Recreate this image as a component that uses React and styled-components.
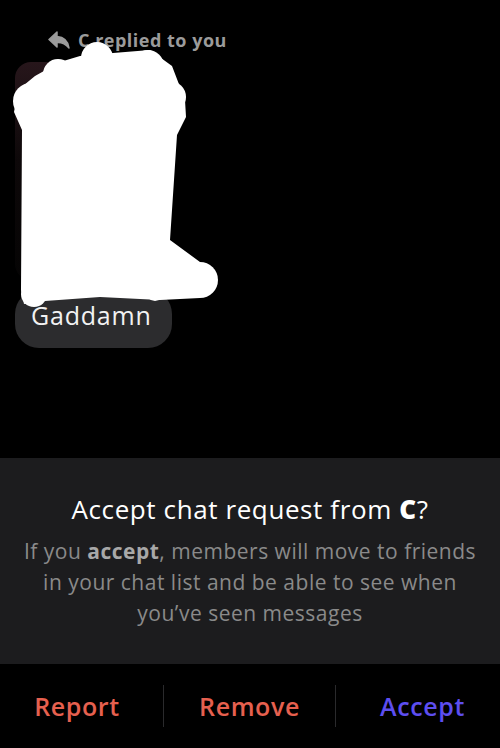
import React from "react";
import styled, { createGlobalStyle } from "styled-components";

const GlobalStyle = createGlobalStyle`
  html, body {
    margin: 0;
    padding: 0;
    background: #000;
  }
  * { box-sizing: border-box; }
`;

function ReplyIcon() {
  return (
    <svg width="22" height="18" viewBox="0 0 22 18">
      <path
        d="M9 1 L1 8.5 L9 16 L9 11.5 C14 11.2 17.5 12.8 21 17 C20 10.5 16.5 6.2 9 5.6 Z"
        fill="#9b9b9b"
        stroke="#9b9b9b"
        strokeWidth="1.5"
        strokeLinejoin="round"
      />
    </svg>
  );
}

// the white scribble that hides the snap preview (drawn in page coords, shifted up 31px)
function Scribble() {
  return (
    <svg width="240" height="290" viewBox="0 0 240 290">
      <g fill="#fff" transform="translate(0,-31)">
        <circle cx="97" cy="58" r="16" />
        <circle cx="148" cy="66" r="16" />
        <circle cx="170" cy="97" r="16" />
        <circle cx="31" cy="101" r="18" />
        <circle cx="58" cy="74" r="15" />
        <circle cx="200" cy="280" r="18" />
        <circle cx="155" cy="291" r="10" />
        <circle cx="34" cy="294" r="13" />
        <path d="M80 56 L113 53 L150 50 L172 66 L185 100 L186 117 L177 135 L170 240 L200 262 L200 298 L160 300 L100 297 L45 301 L24 304 L21 290 L22 130 L14 112 L18 90 L35 76 L60 62 Z" />
      </g>
    </svg>
  );
}

export default function App() {
  return (
    <>
      <GlobalStyle />
      <Screen>
        <ChatArea>
          <ReplyLabel>
            <ReplyIcon />
            C replied to you
          </ReplyLabel>
          <MessageStack>
            <QuotedSnap />
            <Bubble>Gaddamn</Bubble>
            <Cover>
              <Scribble />
            </Cover>
          </MessageStack>
        </ChatArea>

        <Sheet>
          <Title>
            Accept chat request from <strong>C</strong>?
          </Title>
          <Body>
            If you <strong>accept</strong>, members will move to friends
            <br />
            in your chat list and be able to see when
            <br />
            you’ve seen messages
          </Body>
        </Sheet>

        <ActionBar>
          <Action $color="#e6604f" $pad="0 9px 0 0">Report</Action>
          <Action $color="#e6604f" $divided>Remove</Action>
          <Action $color="#5d4ef0" $divided $pad="0 0 0 9px">Accept</Action>
        </ActionBar>
      </Screen>
    </>
  );
}

const Screen = styled.div`
  width: 500px;
  height: 748px;
  background: #000;
  display: flex;
  flex-direction: column;
  font-family: "Open Sans", "Lato", sans-serif;
  overflow: hidden;
`;

const ChatArea = styled.div`
  flex: 1;
  padding: 29px 15px 0 15px;
`;

const ReplyLabel = styled.div`
  display: flex;
  align-items: center;
  gap: 8px;
  margin-left: 33px;
  color: #9b9b9b;
  font-size: 18px;
  font-weight: 700;
  height: 22px;
  letter-spacing: 0.5px;
`;

const MessageStack = styled.div`
  position: relative;
  margin-top: 11px;
  display: flex;
  flex-direction: column;
  align-items: flex-start;
  gap: 10px;
`;

const QuotedSnap = styled.div`
  width: 150px;
  height: 218px;
  border-radius: 16px;
  background: linear-gradient(180deg, #27161b 0%, #0d0809 45%, #050404 100%);
`;

const Bubble = styled.div`
  background: #2c2c2e;
  color: #f2f2f2;
  font-size: 25px;
  letter-spacing: 0.8px;
  border-radius: 24px;
  height: 58px;
  padding: 8px 18px 0 16px;
  width: 157px;
`;

const Cover = styled.div`
  position: absolute;
  left: -15px;
  top: -31px;
  line-height: 0;
`;

const Sheet = styled.div`
  height: 206px;
  background: #1c1c1e;
  padding: 34px 10px 0;
  text-align: center;
`;

const Title = styled.div`
  color: #fff;
  font-size: 26px;
  line-height: 34px;
  letter-spacing: 0.6px;
  strong { font-weight: 800; }
`;

const Body = styled.div`
  margin-top: 10px;
  color: #8a8a8a;
  font-size: 21px;
  line-height: 31px;
  letter-spacing: 0.5px;
  strong { font-weight: 700; color: #a8a8a8; }
`;

const ActionBar = styled.div`
  height: 84px;
  display: grid;
  grid-template-columns: 163px 172px 165px;
  align-items: center;
  padding: 21px 0;
`;

const Action = styled.div`
  height: 100%;
  display: flex;
  align-items: center;
  justify-content: center;
  padding: ${p => p.$pad || "0"};
  color: ${p => p.$color};
  font-size: 25px;
  font-weight: 600;
  letter-spacing: 0.6px;
  border-left: ${p => (p.$divided ? "1px solid #2a2a2c" : "none")};
`;
